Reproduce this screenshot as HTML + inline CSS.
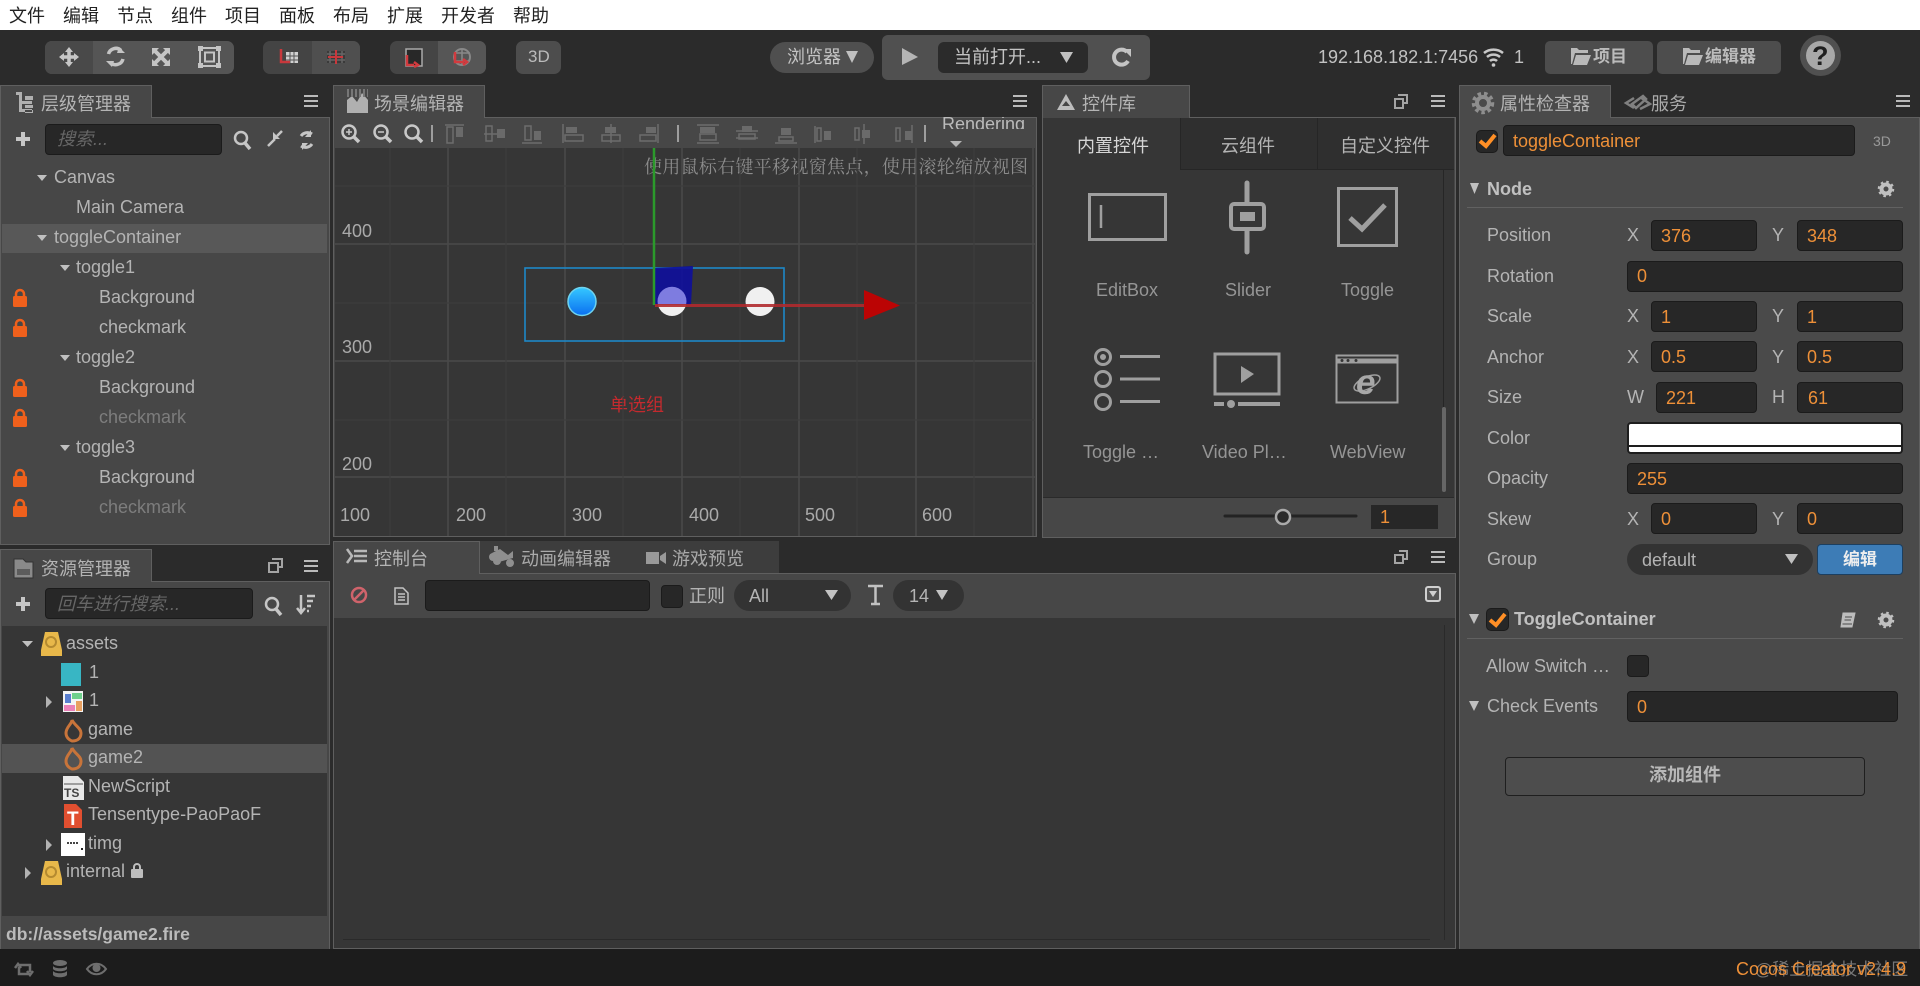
<!DOCTYPE html>
<html><head><meta charset="utf-8"><title>Cocos Creator</title>
<style>
*{box-sizing:border-box}
html{background:#2b2b2b}
html,body{margin:0;padding:0;width:1920px;height:986px;overflow:hidden}
body{background:#2b2b2b;font-family:"Liberation Sans","Noto Sans CJK SC",sans-serif;font-size:18px;color:#bdbdbd;position:relative;filter:blur(.3px)}
.b{position:absolute}
.t{position:absolute;white-space:nowrap;line-height:24px;height:24px}
.m{color:#222;top:4px}
.in{position:absolute;background:#272727;border:1px solid #1b1b1b;border-radius:4px}
.o{color:#ee9038}
.l{color:#b4b4b4}
.dim{color:#7d7d7d}
.tab{position:absolute;background:#474747;border:1px solid #5f5f5f;border-bottom:none}
.panel{position:absolute;background:#474747;border:1px solid #5f5f5f}
.sc{position:absolute;background:#363636}
svg{position:absolute;left:0;top:0}
</style></head><body>
<div class="b" style="left:0;top:0;width:1920px;height:30px;background:#fff"></div>
<span class="t m" style="left:9px">文件</span><span class="t m" style="left:63px">编辑</span><span class="t m" style="left:117px">节点</span><span class="t m" style="left:171px">组件</span><span class="t m" style="left:225px">项目</span><span class="t m" style="left:279px">面板</span><span class="t m" style="left:333px">布局</span><span class="t m" style="left:387px">扩展</span><span class="t m" style="left:441px">开发者</span><span class="t m" style="left:513px">帮助</span>

<!-- top toolbar -->
<div class="b" style="left:45px;top:41px;width:189px;height:33px;background:#555;border-radius:7px"></div>
<div class="b" style="left:45px;top:41px;width:48px;height:33px;background:#494949;border-radius:7px 0 0 7px"></div>
<div class="b" style="left:263px;top:41px;width:97px;height:33px;background:#444;border-radius:7px"></div>
<div class="b" style="left:312px;top:41px;width:48px;height:33px;background:#4f4f4f;border-radius:0 7px 7px 0"></div>
<div class="b" style="left:390px;top:41px;width:96px;height:33px;background:#454545;border-radius:7px"></div>
<div class="b" style="left:438px;top:41px;width:48px;height:33px;background:#565656;border-radius:0 7px 7px 0"></div>
<div class="b" style="left:516px;top:41px;width:45px;height:33px;background:#4d4d4d;border-radius:7px"></div>
<span class="t" style="left:528px;top:45px;color:#bbb;font-size:17px">3D</span>

<div class="b" style="left:770px;top:42px;width:104px;height:31px;background:#4f4f4f;border-radius:16px"></div>
<span class="t" style="left:787px;top:45px;color:#c4c4c4">浏览器</span>
<div class="b" style="left:882px;top:35px;width:268px;height:45px;background:#505050;border-radius:6px"></div>
<div class="b" style="left:938px;top:42px;width:150px;height:31px;background:#2b2b2b;border-radius:6px"></div>
<span class="t" style="left:954px;top:45px;color:#c4c4c4">当前打开...</span>
<span class="t" style="left:1318px;top:45px;color:#c2c2c2">192.168.182.1:7456</span>
<span class="t" style="left:1514px;top:45px;color:#c2c2c2">1</span>
<div class="b" style="left:1545px;top:41px;width:108px;height:33px;background:#4d4d4d;border-radius:5px"></div>
<span class="t" style="left:1593px;top:45px;color:#bbb;font-weight:bold;font-size:17px">项目</span>
<div class="b" style="left:1657px;top:41px;width:124px;height:33px;background:#4d4d4d;border-radius:5px"></div>
<span class="t" style="left:1705px;top:45px;color:#bbb;font-weight:bold;font-size:17px">编辑器</span>
<div class="b" style="left:1800px;top:35px;width:41px;height:41px;background:#505050;border-radius:50%"></div>
<div class="b" style="left:1806px;top:41px;width:29px;height:29px;background:#a8a8a8;border-radius:50%"></div>
<span class="t" style="left:1812px;top:44px;color:#1f1f1f;font-weight:bold;font-size:27px">?</span>

<!-- hierarchy -->
<div class="panel" style="left:0;top:117px;width:330px;height:428px"></div>
<div class="tab" style="left:0;top:85px;width:152px;height:33px"></div>
<span class="t l" style="left:41px;top:92px">层级管理器</span>
<div class="in" style="left:45px;top:124px;width:177px;height:31px"></div>
<span class="t" style="left:57px;top:127px;color:#666;font-style:italic">搜索...</span>
<div class="b" style="left:2px;top:224px;width:325px;height:29px;background:#585858"></div>
<span class="t l" style="left:54px;top:165px">Canvas</span>
<span class="t l" style="left:76px;top:195px">Main Camera</span>
<span class="t l" style="left:54px;top:225px">toggleContainer</span>
<span class="t l" style="left:76px;top:255px">toggle1</span>
<span class="t l" style="left:99px;top:285px">Background</span>
<span class="t l" style="left:99px;top:315px">checkmark</span>
<span class="t l" style="left:76px;top:345px">toggle2</span>
<span class="t l" style="left:99px;top:375px">Background</span>
<span class="t dim" style="left:99px;top:405px">checkmark</span>
<span class="t l" style="left:76px;top:435px">toggle3</span>
<span class="t l" style="left:99px;top:465px">Background</span>
<span class="t dim" style="left:99px;top:495px">checkmark</span>

<!-- assets -->
<div class="panel" style="left:0;top:581px;width:330px;height:369px"></div>
<div class="tab" style="left:0;top:549px;width:152px;height:33px"></div>
<span class="t l" style="left:41px;top:557px">资源管理器</span>
<div class="in" style="left:45px;top:588px;width:208px;height:31px"></div>
<span class="t" style="left:57px;top:592px;color:#666;font-style:italic">回车进行搜索...</span>
<div class="sc" style="left:2px;top:626px;width:325px;height:290px"></div>
<div class="b" style="left:2px;top:744px;width:325px;height:29px;background:#535353"></div>
<span class="t l" style="left:66px;top:631px">assets</span>
<span class="t l" style="left:89px;top:660px">1</span>
<span class="t l" style="left:89px;top:688px">1</span>
<span class="t l" style="left:88px;top:717px">game</span>
<span class="t l" style="left:88px;top:745px">game2</span>
<span class="t l" style="left:88px;top:774px">NewScript</span>
<span class="t l" style="left:88px;top:802px">Tensentype-PaoPaoF</span>
<span class="t l" style="left:88px;top:831px">timg</span>
<span class="t l" style="left:66px;top:859px">internal</span>
<span class="t" style="left:6px;top:922px;font-weight:bold;color:#bbb;font-size:17.5px">db://assets/game2.fire</span>

<!-- scene -->
<div class="panel" style="left:333px;top:117px;width:704px;height:420px"></div>
<div class="tab" style="left:333px;top:85px;width:152px;height:33px"></div>
<span class="t l" style="left:374px;top:92px">场景编辑器</span>
<div class="sc" style="left:335px;top:148px;width:700px;height:388px;overflow:hidden"></div>
<span class="t" style="left:942px;top:112px;color:#bbb;height:17px;overflow:hidden;line-height:24px;clip-path:inset(5px 0 0 0)">Rendering</span>
<span class="t" style="left:644px;top:155px;color:#8c8c8c;font-family:'Liberation Serif','Noto Serif CJK SC',serif;font-size:18px;letter-spacing:.3px">使用鼠标右键平移视窗焦点，使用滚轮缩放视图</span>
<span class="t" style="left:610px;top:393px;color:#c42a2e">单选组</span>
<span class="t" style="left:342px;top:219px;color:#aaa">400</span>
<span class="t" style="left:342px;top:335px;color:#aaa">300</span>
<span class="t" style="left:342px;top:452px;color:#aaa">200</span>
<span class="t" style="left:340px;top:503px;color:#aaa">100</span>
<span class="t" style="left:456px;top:503px;color:#aaa">200</span>
<span class="t" style="left:572px;top:503px;color:#aaa">300</span>
<span class="t" style="left:689px;top:503px;color:#aaa">400</span>
<span class="t" style="left:805px;top:503px;color:#aaa">500</span>
<span class="t" style="left:922px;top:503px;color:#aaa">600</span>

<!-- library -->
<div class="panel" style="left:1042px;top:117px;width:414px;height:421px"></div>
<div class="tab" style="left:1042px;top:85px;width:148px;height:33px"></div>
<span class="t l" style="left:1082px;top:92px">控件库</span>
<div class="sc" style="left:1043px;top:118px;width:411px;height:380px;border-bottom:1px solid #2a2a2a"></div>
<div class="b" style="left:1180px;top:118px;width:137px;height:52px;background:#2f2f2f;border-left:1px solid #262626;border-bottom:1px solid #262626"></div>
<div class="b" style="left:1317px;top:118px;width:137px;height:52px;background:#2f2f2f;border-left:1px solid #262626;border-bottom:1px solid #262626"></div>
<span class="t" style="left:1077px;top:134px;color:#d6d6d6">内置控件</span>
<span class="t l" style="left:1221px;top:134px">云组件</span>
<span class="t l" style="left:1340px;top:134px">自定义控件</span>
<span class="t" style="left:1096px;top:278px;color:#959595">EditBox</span>
<span class="t" style="left:1225px;top:278px;color:#959595">Slider</span>
<span class="t" style="left:1341px;top:278px;color:#959595">Toggle</span>
<span class="t" style="left:1083px;top:440px;color:#959595">Toggle …</span>
<span class="t" style="left:1202px;top:440px;color:#959595">Video Pl…</span>
<span class="t" style="left:1330px;top:440px;color:#959595">WebView</span>
<div class="b" style="left:1443px;top:170px;width:1px;height:237px;background:#262626"></div>
<div class="b" style="left:1442px;top:407px;width:4px;height:85px;background:#666;border-radius:2px"></div>
<div class="b" style="left:1371px;top:505px;width:67px;height:24px;background:#272727"></div>
<span class="t o" style="left:1380px;top:505px">1</span>

<!-- console -->
<div class="panel" style="left:333px;top:573px;width:1123px;height:376px"></div>
<div class="b" style="left:480px;top:541px;width:299px;height:32px;background:#3d3d3d"></div>
<div class="tab" style="left:333px;top:541px;width:147px;height:33px"></div>
<span class="t l" style="left:374px;top:547px">控制台</span>
<span class="t l" style="left:521px;top:547px;color:#aaa">动画编辑器</span>
<span class="t l" style="left:672px;top:547px;color:#aaa">游戏预览</span>
<div class="sc" style="left:334px;top:618px;width:1121px;height:330px"></div>
<div class="b" style="left:343px;top:939px;width:1087px;height:1px;background:#2a2a2a"></div>
<div class="b" style="left:1444px;top:625px;width:1px;height:315px;background:#2a2a2a"></div>
<div class="in" style="left:425px;top:580px;width:225px;height:31px"></div>
<div class="in" style="left:661px;top:585px;width:22px;height:23px"></div>
<span class="t l" style="left:689px;top:584px">正则</span>
<div class="b" style="left:734px;top:580px;width:117px;height:31px;background:#333;border-radius:16px"></div>
<span class="t l" style="left:749px;top:584px">All</span>
<div class="b" style="left:893px;top:580px;width:71px;height:31px;background:#333;border-radius:16px"></div>
<span class="t l" style="left:909px;top:584px">14</span>

<!-- inspector -->
<div class="panel" style="left:1459px;top:117px;width:461px;height:833px;background:#4a4a4a"></div>
<div class="tab" style="left:1459px;top:85px;width:152px;height:33px;background:#4a4a4a"></div>
<span class="t l" style="left:1500px;top:92px">属性检查器</span>
<span class="t l" style="left:1651px;top:92px;color:#aaa">服务</span>
<div class="in" style="left:1476px;top:130px;width:22px;height:23px;border-radius:5px"></div>
<div class="in" style="left:1503px;top:125px;width:352px;height:31px"></div>
<span class="t o" style="left:1513px;top:129px">toggleContainer</span>
<span class="t" style="left:1873px;top:129px;color:#999;font-size:14px">3D</span>
<span class="t" style="left:1487px;top:177px;font-weight:bold;color:#c0c0c0">Node</span>
<div class="b" style="left:1467px;top:207px;width:436px;height:1px;background:#616161"></div>

<span class="t l" style="left:1487px;top:223px">Position</span><span class="t l" style="left:1627px;top:223px">X</span><span class="t l" style="left:1772px;top:223px">Y</span>
<div class="in" style="left:1651px;top:220px;width:106px;height:31px"></div><span class="t o" style="left:1661px;top:224px">376</span>
<div class="in" style="left:1797px;top:220px;width:106px;height:31px"></div><span class="t o" style="left:1807px;top:224px">348</span>
<span class="t l" style="left:1487px;top:264px">Rotation</span>
<div class="in" style="left:1627px;top:261px;width:276px;height:31px"></div><span class="t o" style="left:1637px;top:264px">0</span>
<span class="t l" style="left:1487px;top:304px">Scale</span><span class="t l" style="left:1627px;top:304px">X</span><span class="t l" style="left:1772px;top:304px">Y</span>
<div class="in" style="left:1651px;top:301px;width:106px;height:31px"></div><span class="t o" style="left:1661px;top:305px">1</span>
<div class="in" style="left:1797px;top:301px;width:106px;height:31px"></div><span class="t o" style="left:1807px;top:305px">1</span>
<span class="t l" style="left:1487px;top:345px">Anchor</span><span class="t l" style="left:1627px;top:345px">X</span><span class="t l" style="left:1772px;top:345px">Y</span>
<div class="in" style="left:1651px;top:341px;width:106px;height:31px"></div><span class="t o" style="left:1661px;top:345px">0.5</span>
<div class="in" style="left:1797px;top:341px;width:106px;height:31px"></div><span class="t o" style="left:1807px;top:345px">0.5</span>
<span class="t l" style="left:1487px;top:385px">Size</span><span class="t l" style="left:1627px;top:385px">W</span><span class="t l" style="left:1772px;top:385px">H</span>
<div class="in" style="left:1656px;top:382px;width:101px;height:31px"></div><span class="t o" style="left:1666px;top:386px">221</span>
<div class="in" style="left:1797px;top:382px;width:106px;height:31px"></div><span class="t o" style="left:1808px;top:386px">61</span>
<span class="t l" style="left:1487px;top:426px">Color</span>
<div class="b" style="left:1627px;top:422px;width:276px;height:32px;background:#fff;border:2px solid #1e1e1e;border-radius:4px"></div>
<div class="b" style="left:1629px;top:445px;width:272px;height:2px;background:#1e1e1e"></div>
<span class="t l" style="left:1487px;top:466px">Opacity</span>
<div class="in" style="left:1627px;top:463px;width:276px;height:31px"></div><span class="t o" style="left:1637px;top:467px">255</span>
<span class="t l" style="left:1487px;top:507px">Skew</span><span class="t l" style="left:1627px;top:507px">X</span><span class="t l" style="left:1772px;top:507px">Y</span>
<div class="in" style="left:1651px;top:503px;width:106px;height:31px"></div><span class="t o" style="left:1661px;top:507px">0</span>
<div class="in" style="left:1797px;top:503px;width:106px;height:31px"></div><span class="t o" style="left:1807px;top:507px">0</span>
<span class="t l" style="left:1487px;top:547px">Group</span>
<div class="b" style="left:1627px;top:544px;width:186px;height:31px;background:#333;border-radius:16px"></div>
<span class="t l" style="left:1642px;top:548px">default</span>
<div class="b" style="left:1817px;top:544px;width:86px;height:31px;background:#3d7cb6;border:1px solid #1c3f60;border-radius:4px"></div>
<span class="t" style="left:1843px;top:548px;color:#eee;font-weight:bold;font-size:17px">编辑</span>

<div class="in" style="left:1486px;top:608px;width:23px;height:23px;border-radius:5px"></div>
<span class="t" style="left:1514px;top:607px;font-weight:bold;color:#c0c0c0">ToggleContainer</span>
<div class="b" style="left:1467px;top:638px;width:436px;height:1px;background:#616161"></div>
<span class="t l" style="left:1486px;top:654px">Allow Switch …</span>
<div class="in" style="left:1627px;top:655px;width:22px;height:22px"></div>
<span class="t l" style="left:1487px;top:694px">Check Events</span>
<div class="in" style="left:1627px;top:691px;width:271px;height:31px"></div><span class="t o" style="left:1637px;top:695px">0</span>
<div class="b" style="left:1505px;top:757px;width:360px;height:39px;background:#4d4d4d;border:1px solid #1f1f1f;border-radius:4px"></div>
<span class="t" style="left:1649px;top:763px;font-weight:bold;color:#b8b8b8">添加组件</span>

<!-- status -->
<div class="b" style="left:0;top:949px;width:1920px;height:37px;background:#1c1c1c"></div>
<span class="t" style="left:1755px;top:958px;color:#777;font-size:17px">@稀土掘金技术社区</span>
<span class="t o" style="left:1736px;top:957px">Cocos Creator v2.4.9</span>

<svg width="1920" height="986" viewBox="0 0 1920 986" xmlns="http://www.w3.org/2000/svg">
<!-- scene grid -->
<g stroke="#4a4a4a" stroke-width="1.500" fill="none">
<path d="M448 148V536M565 148V536M682 148V536M799 148V536M916 148V536M1033 148V536M335 244H1035M335 361H1035M335 477H1035"/>
</g>
<g stroke="#3d3d3d" stroke-width="1.200" fill="none">
<path d="M390 148V536M506 148V536M623 148V536M740 148V536M857 148V536M974 148V536M335 186H1035M335 303H1035M335 420H1035"/>
</g>
<rect x="525" y="268" width="259" height="73" fill="none" stroke="#1d88c8" stroke-width="1.600"/>
<defs><linearGradient id="bl" x1="0" y1="0" x2="0" y2="1"><stop offset="0" stop-color="#35c8ff"/><stop offset="1" stop-color="#0a6ff0"/></linearGradient></defs>
<circle cx="582" cy="301.500" r="14" fill="url(#bl)" stroke="#6fd3ee" stroke-width="1.500"/>
<circle cx="672" cy="301.500" r="14.500" fill="#f0f0f0"/>
<circle cx="760" cy="301.500" r="14.500" fill="#f0f0f0"/>
<path d="M655 268L693 266L691 305H655Z" fill="#0f0f9a" fill-opacity=".92"/>
<path d="M658 305A14.500 14.500 0 1 1 686 305Z" fill="#7e7ce0"/>
<path d="M654 148V305" stroke="#2b9a2b" stroke-width="2.500"/>
<path d="M655 305.500H866" stroke="#b02a2e" stroke-width="3" stroke-opacity=".9"/>
<path d="M864 290L900 305.500L864 320Z" fill="#bb0404"/>
<!-- top tools -->
<g fill="#c6c6c6">
<path d="M69 50V64M61 57H77" stroke="#c8c8c8" stroke-width="3.500"/><path d="M69 47L73 52H65ZM69 67L73 62H65ZM59 57L64 53V61ZM79 57L74 53V61Z"/>
</g>
<g fill="none" stroke="#c4c4c4" stroke-width="3.500">
<path d="M108.500 54A7.500 7.500 0 0 1 121 50.500M123 59A7.500 7.500 0 0 1 110 62"/>
<path d="M155 51L167 63M167 51L155 63" stroke-width="4"/>
<rect x="200" y="48" width="19" height="18" stroke-width="2"/><rect x="205" y="52.500" width="9" height="9" stroke-width="2"/>
</g>
<g fill="#c4c4c4"><path d="M119 47L125 53H117ZM112 67L106 61H114Z"/><path d="M152 48H159L152 55ZM170 48V55L163 48ZM152 66V59L159 66ZM170 66H163L170 59Z"/><rect x="198" y="46" width="5" height="5"/><rect x="216" y="46" width="5" height="5"/><rect x="198" y="63" width="5" height="5"/><rect x="216" y="63" width="5" height="5"/></g>
<!-- pivot icons -->
<rect x="286" y="52" width="12" height="11" fill="#d0d0d0"/><path d="M286 56H298M286 60H298M290 52V63M294 52V63" stroke="#555" stroke-width="1"/>
<path d="M281 49V62H290" stroke="#c8383c" fill="none" stroke-width="2.500"/>
<rect x="327" y="51" width="18" height="12" fill="#3a3a3a"/><path d="M327 54H345M327 60H345M330 51V63M342 51V63" stroke="#666" stroke-width="1.500"/><path d="M328 57H343M336 50V64" stroke="#c8383c" fill="none" stroke-width="2"/>
<rect x="406" y="49" width="16" height="17" fill="#282828" stroke="#aaa" stroke-width="1.500"/><path d="M407 55V65H414M414 62L418 65L414 67" stroke="#d23a3e" fill="none" stroke-width="2.500"/>
<circle cx="462" cy="57" r="8" fill="none" stroke="#888" stroke-width="2"/><path d="M455 53H470M455 61H470M462 49V65" stroke="#888" stroke-width="1.500"/><path d="M455 52V62H464M463 59L467 62L463 65" stroke="#d23a3e" fill="none" stroke-width="2.500"/>
<path d="M902 48L918 57L902 65Z" fill="#b5b5b5"/>
<path d="M1060 52H1073L1066.500 63Z" fill="#c0c0c0"/>
<path d="M846 51H858L852 63Z" fill="#c0c0c0"/>
<path d="M1127 52A7.500 7.500 0 1 0 1128 61" fill="none" stroke="#c4c4c4" stroke-width="4"/><path d="M1123 49H1131V57Z" fill="#c4c4c4"/>
<!-- wifi -->
<g fill="none" stroke="#c8c8c8" stroke-width="2.500"><path d="M1484 53A15 15 0 0 1 1503 53M1487 57A10 10 0 0 1 1500 57M1490 61A5 5 0 0 1 1497 61"/></g><circle cx="1493.500" cy="65" r="1.800" fill="#c8c8c8"/>
<!-- folder buttons -->
<path d="M1571 48H1577L1579 50H1588V53H1575L1572 64H1571ZM1576 55H1591L1587 65H1573Z" fill="#b9b9b9"/>
<path d="M1683 48H1689L1691 50H1700V53H1687L1684 64H1683ZM1688 55H1703L1699 65H1685Z" fill="#b9b9b9"/>
<!-- tab icons -->
<g fill="#b0b0b0"><path d="M16 92H22V95H16ZM19 95V112H32V109H22V104H32V101H22V95ZM25 96H33V100H25ZM25 105H33V108H25ZM25 110H33V113H25Z"/></g>
<g><path d="M347 113V100L352 96L357 102L362 93L368 100V113Z" fill="#b0b0b0"/><path d="M347 93H368" stroke="#777" stroke-width="8" stroke-dasharray="2 2"/></g>
<path d="M1066 94L1075 110H1057ZM1066 101L1062 106H1070Z" fill="#bdbdbd" fill-rule="evenodd"/>
<!-- inspector gear -->
<g fill="none" stroke="#8e8e8e" stroke-width="4"><circle cx="1483" cy="103" r="6"/><circle cx="1483" cy="103" r="9.500" stroke-dasharray="3.500 3" stroke-width="3.500"/></g>
<path d="M1634 98L1626 103L1634 108M1640 97L1650 104L1640 109M1632 104L1643 96L1646 99L1636 108Z" fill="none" stroke="#808080" stroke-width="2.500"/>
<!-- hamburger -->
<g stroke="#bababa" stroke-width="2"><path d="M304 96H318M304 101H318M304 106H318"/><path d="M1013 96H1027M1013 101H1027M1013 106H1027"/><path d="M1431 96H1445M1431 101H1445M1431 106H1445"/><path d="M1896 96H1910M1896 101H1910M1896 106H1910"/><path d="M304 561H318M304 566H318M304 571H318"/><path d="M1431 552H1445M1431 557H1445M1431 562H1445"/></g>
<!-- float icons -->
<g fill="none" stroke="#a4a4a4" stroke-width="2"><path d="M1398 95H1407V103H1403M1395 99H1403V108H1395Z"/><path d="M272 559H282V567H278M269 563H278V572H269Z"/><path d="M1399 551H1407V559H1403M1395 555H1403V563H1395Z"/></g>
<!-- search rows -->
<path d="M23 132V146M16 139H30" stroke="#c6c6c6" stroke-width="4"/><path d="M23 597V611M16 604H30" stroke="#c6c6c6" stroke-width="4"/>
<g fill="none" stroke="#c6c6c6" stroke-width="2.500"><circle cx="241" cy="138" r="6"/><path d="M245 143L250 149" stroke-width="3.500"/><circle cx="272" cy="604" r="6"/><path d="M276 609L281 615" stroke-width="3.500"/>
<path d="M268 146L275 139M282 131L277 136"/><path d="M301 136A8 8 0 0 1 312 134M312 144A8 8 0 0 1 301 146" stroke-width="3"/></g>
<path d="M273 132V139H280Z" fill="#c6c6c6"/><path d="M311 130V137H305ZM302 150V143H308Z" fill="#c6c6c6"/>
<path d="M301 595V612M297 608L301 613L305 608" stroke="#c6c6c6" stroke-width="2.500" fill="none"/><path d="M307 596H315M307 601H313M307 606H311M307 611H309" stroke="#c6c6c6" stroke-width="2.500"/>
<!-- tree arrows -->
<g fill="#c0c0c0"><path d="M37 175H47L42 181ZM37 235H47L42 241ZM60 265H70L65 271ZM60 355H70L65 361ZM60 445H70L65 451ZM22 641H33L27.500 647Z"/><path d="M46 696L52 702L46 708ZM46 839L52 845L46 851ZM25 867L31 873L25 879ZM950 141H962L956 147Z" opacity=".9"/></g>
<!-- locks -->
<g fill="#f0601c"><rect x="13" y="296" width="14" height="11" rx="1.500"/><rect x="13" y="326" width="14" height="11" rx="1.500"/><rect x="13" y="386" width="14" height="11" rx="1.500"/><rect x="13" y="416" width="14" height="11" rx="1.500"/><rect x="13" y="476" width="14" height="11" rx="1.500"/><rect x="13" y="506" width="14" height="11" rx="1.500"/></g>
<g fill="none" stroke="#f0601c" stroke-width="2.500"><path d="M16 296V294A4 4 0 0 1 24 294V296M16 326V324A4 4 0 0 1 24 324V326M16 386V384A4 4 0 0 1 24 384V386M16 416V414A4 4 0 0 1 24 414V416M16 476V474A4 4 0 0 1 24 474V476M16 506V504A4 4 0 0 1 24 504V506"/></g>
<!-- scene toolbar -->
<g fill="none" stroke="#c8c8c8" stroke-width="2.500"><circle cx="349" cy="132" r="6.500"/><path d="M354 137L359 142" stroke-width="3.500"/><path d="M346 132H352M349 129V135" stroke-width="1.500"/><circle cx="381" cy="132" r="6.500"/><path d="M386 137L391 142" stroke-width="3.500"/><path d="M378 132H384" stroke-width="1.500"/><circle cx="412" cy="132" r="6.500"/><path d="M417 137L422 142" stroke-width="3.500"/></g>
<path d="M432 125V142M678 125V142M925 125V142" stroke="#bbb" stroke-width="1.500"/>
<g fill="none" stroke="#6d6d6d" stroke-width="1.500">
<path d="M445 125H464M447 127H453V143H447Z"/><path d="M484 134H504M486 126H492V141H486Z"/><path d="M522 143H542M525 126H531V140H525Z"/>
<path d="M563 124V143M565 135H583V141H565Z"/><path d="M611 124V143M602 135H620V141H602Z"/><path d="M658 124V143M640 135H656V141H640Z"/>
<path d="M697 125H719M700 134H716V140H700ZM697 143H719"/><path d="M736 131H758M739 134H755V139H739ZM736 138H758"/><path d="M775 143H797M779 137H793V141H779Z"/>
<path d="M815 126V143M817 128H821V141H817Z"/><path d="M864 124V144M855 128H859V140H855Z"/><path d="M912 125V143M896 128H900V141H896Z"/>
</g>
<g fill="#6a6a6a"><rect x="456" y="127" width="7" height="10"/><rect x="497" y="129" width="8" height="9"/><rect x="534" y="131" width="7" height="9"/><rect x="566" y="127" width="11" height="6"/><rect x="605" y="127" width="11" height="6"/><rect x="646" y="127" width="10" height="6"/><rect x="700" y="127" width="15" height="6"/><rect x="742" y="126" width="10" height="6"/><rect x="781" y="128" width="10" height="7"/><rect x="824" y="131" width="7" height="9"/><rect x="862" y="130" width="8" height="8"/><rect x="905" y="131" width="7" height="9"/></g>
<!-- library icons -->
<g fill="none" stroke="#9f9f9f" stroke-width="3">
<rect x="1089.500" y="194.500" width="76" height="45"/><path d="M1101 205V228" stroke-width="2.500"/>
<path d="M1247 183V252" stroke-width="5" stroke-linecap="round"/>
<rect x="1231" y="204" width="33" height="25" rx="3" fill="#363636" stroke-width="4"/><rect x="1240" y="212" width="15" height="9" fill="#9f9f9f" stroke="none"/>
<rect x="1338.500" y="188.500" width="58" height="57"/><path d="M1350 218L1362 229L1385 205" stroke-width="5"/>
<circle cx="1103" cy="357" r="7.500"/><circle cx="1103" cy="379" r="7.500"/><circle cx="1103" cy="402" r="7.500"/><path d="M1120 356.500H1160M1120 379H1160M1120 401.500H1160"/>
<rect x="1215" y="354" width="64" height="40"/><path d="M1214 404H1224M1238 404H1280" stroke-width="4"/>
<rect x="1336.500" y="355.500" width="61" height="47" stroke-width="2"/>
</g>
<circle cx="1103" cy="357" r="3" fill="#9f9f9f"/><path d="M1241 366L1254 374L1241 383Z" fill="#9f9f9f"/><circle cx="1231" cy="404" r="4" fill="#9f9f9f"/>
<path d="M1337 361H1397" stroke="#9f9f9f" stroke-width="5"/><g fill="#363636"><circle cx="1342" cy="360.500" r="1.500"/><circle cx="1348" cy="360.500" r="1.500"/><circle cx="1356" cy="360.500" r="1.500"/></g>
<ellipse cx="1367" cy="383" rx="14" ry="6" transform="rotate(-25 1367 383)" fill="none" stroke="#9f9f9f" stroke-width="1.500"/>
<text x="1356" y="394" font-family="Liberation Sans,sans-serif" font-size="35" font-style="italic" font-weight="bold" fill="#a8a8a8">e</text>
<path d="M1225 516H1356" stroke="#232323" stroke-width="3" stroke-linecap="round"/><circle cx="1283" cy="517" r="7" fill="#2a2a2a" stroke="#aaa" stroke-width="2.500"/>
<!-- console icons -->
<circle cx="359" cy="595" r="7" fill="none" stroke="#d0636b" stroke-width="2.500"/><path d="M354 600L364 590" stroke="#d0636b" stroke-width="2.500"/>
<path d="M395 588H403L408 593V604H395ZM398 594H405M398 597H405M398 600H405" fill="none" stroke="#c4c4c4" stroke-width="1.500"/>
<path d="M347 549L352 556L347 563" fill="none" stroke="#b8b8b8" stroke-width="2.500"/><path d="M354 551H367M354 556H367M354 561H367" stroke="#b8b8b8" stroke-width="2.500"/>
<g fill="#8f8f8f"><circle cx="497" cy="561" r="4"/><circle cx="510" cy="563" r="4"/><circle cx="493" cy="557" r="4"/><path d="M492 553L500 549L508 555L513 551V558L499 562Z"/><rect x="494" y="546" width="4" height="5"/></g>
<path d="M646 552H659V564H646ZM660 556L666 552V564L660 560Z" fill="#999"/>
<path d="M825 590H838L831.500 600ZM936 590H948L942 600Z" fill="#c4c4c4"/>
<path d="M868 586H883M875.500 586V604M871 604H880" fill="none" stroke="#c2c2c2" stroke-width="2.500"/>
<rect x="1426" y="587" width="14" height="14" rx="2" fill="#555" stroke="#d0d0d0" stroke-width="2"/><path d="M1429 591H1437L1433 597Z" fill="#d0d0d0"/>
<!-- inspector icons -->
<path d="M1480 141L1486 146L1495 135" fill="none" stroke="#ff8f26" stroke-width="4"/>
<path d="M1490 620L1496 625L1505 614" fill="none" stroke="#ff8f26" stroke-width="4"/>
<g fill="#c0c0c0"><path d="M1470 183H1479L1474.500 194ZM1469 614H1479L1474 624ZM1469 701H1479L1474 711ZM1785 554H1798L1791.500 564Z"/></g>
<g fill="none" stroke="#c0c0c0"><circle cx="1886" cy="189" r="4.500" stroke-width="4"/><circle cx="1886" cy="189" r="7" stroke-width="2.500" stroke-dasharray="2.500 3"/><circle cx="1886" cy="620" r="4.500" stroke-width="4"/><circle cx="1886" cy="620" r="7" stroke-width="2.500" stroke-dasharray="2.500 3"/></g>
<path d="M1843 613H1855L1852 627H1841L1843 613Z" fill="#bdbdbd" stroke="#bdbdbd"/><path d="M1842.500 624H1852M1845 617H1852M1844.500 620H1851" stroke="#4a4a4a" stroke-width="1"/>
<!-- asset icons -->
<g><path d="M45 632H58L62 650V656H41V650Z" fill="#e8b84a"/><circle cx="51" cy="642" r="5" fill="none" stroke="#b48a30" stroke-width="2"/>
<path d="M45 861H58L62 879V885H41V879Z" fill="#e8b84a"/><circle cx="51" cy="872" r="5" fill="none" stroke="#b48a30" stroke-width="2"/></g>
<rect x="61" y="663" width="20" height="23" fill="#38b6c4"/>
<rect x="63" y="691" width="20" height="21" fill="#f4f4f4"/><rect x="65" y="694" width="6" height="9" fill="#5a7fd0"/><rect x="72" y="693" width="10" height="6" fill="#6fd08c"/><rect x="64" y="705" width="11" height="6" fill="#ea80b8"/><rect x="76" y="701" width="6" height="10" fill="#e8a060"/>
<g fill="none" stroke="#c8743a" stroke-width="3"><path d="M72 720C72 724 66 727 66 733C66 739 72 741 72 741C78 741 81 738 81 733C81 728 75 726 72 720Z"/><path d="M72 748C72 752 66 755 66 761C66 767 72 769 72 769C78 769 81 766 81 761C81 756 75 754 72 748Z"/></g>
<path d="M63 776H78L84 782V800H63Z" fill="#e8e8e8"/><path d="M64 784H83" stroke="#555" stroke-width="1"/>
<text x="64" y="797" font-family="Liberation Sans,sans-serif" font-size="12" font-weight="bold" fill="#444">TS</text>
<path d="M64 804H76L82 810V828H64Z" fill="#e14f30"/>
<text x="67" y="825" font-family="Liberation Sans,sans-serif" font-size="19" font-weight="bold" fill="#fff">T</text>
<rect x="61" y="833" width="24" height="23" fill="#fff"/><path d="M67 843H78" stroke="#444" stroke-width="2" stroke-dasharray="2 1"/><rect x="81" y="848" width="2" height="2" fill="#222"/>
<rect x="131" y="869" width="12" height="9" rx="1" fill="#bdbdbd"/><path d="M134 869V867A3 3 0 0 1 140 867V869" fill="none" stroke="#bdbdbd" stroke-width="2"/>
<!-- assets tab icon -->
<path d="M14 559H23L26 562H33V578H14Z" fill="#8a8a8a" stroke="#333"/><rect x="17" y="569" width="13" height="6" fill="#5c5c5c"/>
<!-- status icons -->
<g fill="none" stroke="#6e6e6e" stroke-width="2.500"><path d="M18 965H30V972M31 974H19V967"/><path d="M15 968L18 964L21 968M27 971L30 975L33 971"/></g>
<g fill="#6e6e6e"><ellipse cx="60" cy="963" rx="7" ry="3"/><path d="M53 966C55 969 65 969 67 966V969C65 972 55 972 53 969ZM53 971C55 974 65 974 67 971V975C65 978 55 978 53 975Z"/></g>
<path d="M87 969C92 962 101 962 106 969C101 976 92 976 87 969Z" fill="none" stroke="#6e6e6e" stroke-width="2"/><circle cx="96.500" cy="968" r="4" fill="#6e6e6e"/>
</svg>
</body></html>
